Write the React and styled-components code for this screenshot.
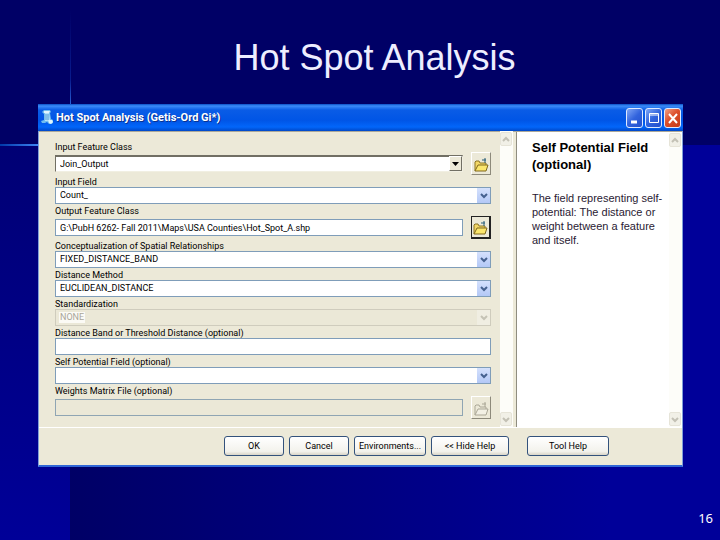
import React from 'react'
import styled, { createGlobalStyle, css } from 'styled-components'

const FORM_FONT = "Roboto, 'Liberation Sans', Arial, sans-serif"
const HELP_FONT = "'Liberation Sans', Arial, sans-serif"

const fields = [
  { id: 'inputClass', label: 'Input Feature Class', kind: 'classic', value: 'Join_Output', browse: 'normal' },
  { id: 'inputField', label: 'Input Field', kind: 'select', value: 'Count_' },
  { id: 'outputClass', label: 'Output Feature Class', kind: 'text', value: 'G:\\PubH 6262- Fall 2011\\Maps\\USA Counties\\Hot_Spot_A.shp', browse: 'focused' },
  { id: 'concept', label: 'Conceptualization of Spatial Relationships', kind: 'select', value: 'FIXED_DISTANCE_BAND' },
  { id: 'method', label: 'Distance Method', kind: 'select', value: 'EUCLIDEAN_DISTANCE' },
  { id: 'standard', label: 'Standardization', kind: 'select', value: 'NONE', disabled: true },
  { id: 'band', label: 'Distance Band or Threshold Distance (optional)', kind: 'text', value: '' },
  { id: 'potential', label: 'Self Potential Field (optional)', kind: 'select', value: '' },
  { id: 'weights', label: 'Weights Matrix File (optional)', kind: 'text', value: '', browse: 'disabled', disabled: true },
]

const ToolIcon = () => (
  <svg width="14" height="18" viewBox="0 0 14 18" aria-hidden="true">
    <path d="M2 3l2-2h6l1 2-1 1 1 6 2 1v3l-2 1H9l-2-2-2 1H2L1 12l3-1V5z" fill="#6fbdf0" />
    <path d="M4 2h6l-1 2H4zM8 11h4l1 2-2 2-2-1z" fill="#e0f5ff" />
    <path d="M5 4h4l1 7-3 1H5z" fill="#b5e2fb" />
    <path d="M5 6h4M5 8h4M5 10h4" stroke="#4a9ad6" />
  </svg>
)

const Chevron = ({ up, color }) => (
  <svg width="8" height="7" viewBox="0 0 8 7" aria-hidden="true">
    <path d={up ? 'M1 5l3-3 3 3' : 'M1 2l3 3 3-3'} fill="none" stroke={color} strokeWidth="2" />
  </svg>
)

const FolderIcon = ({ off }) => (
  <svg width="15" height="18" viewBox="0 0 15 18" aria-hidden="true">
    <path d="M1 16V7l1-1h3l1 2h6v3" fill={off ? 'none' : '#f3d867'} stroke={off ? '#aaa796' : '#8d7424'} />
    <path d="M1 16l3-6h10l-2 6z" fill={off ? '#f2f0e4' : '#fbe66c'} stroke={off ? '#aaa796' : '#80691c'} />
    <path d="M8 5h4M11 3v5" fill="none" stroke={off ? '#aaa796' : '#245a76'} />
  </svg>
)

const Field = ({ id, label, kind, value, browse, disabled }) => (
  <Row>
    <Label htmlFor={id}>{label}</Label>
    <Controls>
      <Box>
        {kind === 'text'
          ? <TextInput id={id} defaultValue={value} disabled={disabled} />
          : (
            <React.Fragment>
              <Select id={id} $classic={kind === 'classic'} defaultValue={value} disabled={disabled}>
                <option value={value}>{value}</option>
              </Select>
              <Arrow $classic={kind === 'classic'} $off={disabled}>
                {kind === 'classic'
                  ? <svg width="7" height="4" viewBox="0 0 7 4"><path d="M0 0h7L3.5 4z" fill="#000" /></svg>
                  : <Chevron color={disabled ? '#c5c3b5' : '#45618f'} />}
              </Arrow>
            </React.Fragment>
          )}
      </Box>
      {browse && (
        <Browse type="button" aria-label={`Browse ${label}`} $look={browse} disabled={browse === 'disabled'}>
          <FolderIcon off={browse === 'disabled'} />
        </Browse>
      )}
    </Controls>
  </Row>
)

const ScrollBar = () => (
  <Scroll>
    <ScrollButton type="button" aria-label="Scroll up"><Chevron up color="#c3c1b5" /></ScrollButton>
    <ScrollButton type="button" aria-label="Scroll down"><Chevron color="#c3c1b5" /></ScrollButton>
  </Scroll>
)

class App extends React.Component {
  render() {
    return (
      <Slide>
        <GlobalStyle />
        <Heading>Hot Spot Analysis</Heading>
        <Window>
          <TitleBar>
            <ToolIcon />
            <WindowTitle>Hot Spot Analysis (Getis-Ord Gi*)</WindowTitle>
            <Caption type="button" aria-label="Minimize">
              <svg width="14" height="16" viewBox="0 0 14 16"><path d="M3 12h6" stroke="#fff" strokeWidth="3" /></svg>
            </Caption>
            <Caption type="button" aria-label="Maximize">
              <svg width="14" height="16" viewBox="0 0 14 16"><path d="M2.5 3.5h9v9h-9zM3 5h8" fill="none" stroke="#fff" /></svg>
            </Caption>
            <Caption type="button" aria-label="Close" $close>
              <svg width="14" height="16" viewBox="0 0 14 16"><path d="M3 4l8 9M11 4l-8 9" stroke="#fff" strokeWidth="2" /></svg>
            </Caption>
          </TitleBar>
          <Body>
            <Form>
              {fields.map((field) => <Field key={field.id} {...field} />)}
            </Form>
            <ScrollBar />
            <Help>
              <HelpText>
                <HelpTitle>Self Potential Field (optional)</HelpTitle>
                <p>The field representing self-potential: The distance or weight between a feature and itself.</p>
              </HelpText>
              <ScrollBar />
            </Help>
          </Body>
          <Footer>
            <Button type="button" $width={60}>OK</Button>
            <Button type="button" $width={60}>Cancel</Button>
            <Button type="button" $width={72}>Environments...</Button>
            <Button type="button" $width={78}>&lt;&lt; Hide Help</Button>
            <HelpButton type="button" $width={82}>Tool Help</HelpButton>
          </Footer>
        </Window>
        <PageNumber>16</PageNumber>
      </Slide>
    )
  }
}

const GlobalStyle = createGlobalStyle`
  * {
    box-sizing: border-box;
  }
  body, h1, h2, p {
    margin: 0;
  }
  button, input, select {
    font-family: inherit;
    margin: 0;
    padding: 0;
  }
`

const Slide = styled.main`
  min-height: 100vh;
  display: flex;
  flex-direction: column;
  padding: 36px 37px 0 38px;
  font-family: ${FORM_FONT};
  background:
    linear-gradient(to bottom, rgba(30, 90, 230, 0), rgba(30, 90, 230, 0.3) 70%, #2f70e8) 70px 10px / 1px 100px no-repeat,
    linear-gradient(to right, #0038a8, #3f86f5 55%) 0 144px / 70px 2px no-repeat,
    linear-gradient(to bottom, #000074, #000099 75%) 0 145px / 70px 100% no-repeat,
    linear-gradient(to right, #000066, #000099 75%) 70px 145px / 100% 100% no-repeat,
    #000066;
`

const Heading = styled.h1`
  color: #eeeeff;
  font: 36px/44px ${HELP_FONT};
  text-align: center;
  padding-left: 28px;
  margin-bottom: 24px;
`

const Window = styled.section`
  display: flex;
  flex-direction: column;
  background: #ece9d8;
  border: 1px solid #7f9fd8;
  border-top: 0;
  border-bottom: 2px solid #2f66d6;
`

const TitleBar = styled.header`
  display: flex;
  align-items: center;
  gap: 2px;
  height: 27px;
  margin: 0 -1px;
  padding: 0 2px;
  background: linear-gradient(#0a4fc4, #3c8cf8 2px, #0a5ce6 6px, #0055e6 60%, #0266fa 85%, #0048c8);
`

const WindowTitle = styled.h2`
  flex: 1;
  color: #fff;
  font-size: 11px;
  line-height: 18px;
  text-shadow: 1px 1px #0a318f;
`

const Caption = styled.button`
  display: flex;
  align-items: center;
  justify-content: center;
  width: 17px;
  height: 20px;
  border: 1px solid #dfeaff;
  border-radius: 3px;
  background: ${props => props.$close
    ? 'linear-gradient(135deg, #f0a086, #dd4f2c 45%, #c23a18)'
    : 'linear-gradient(135deg, #7fa6f5, #3163dd 50%, #2450cc)'};
`

const Body = styled.div`
  display: flex;
  border-bottom: 1px solid #fff;
  box-shadow: inset 0 1px #aca899;
`

const Form = styled.form`
  flex: 1;
  display: flex;
  flex-direction: column;
  gap: 1px;
  padding: 10px 9px 8px 16px;
`

const Row = styled.div`
  display: flex;
  flex-direction: column;
`

const Label = styled.label`
  height: 11px;
  font-size: 9px;
  line-height: 13px;
  color: #000;
`

const Controls = styled.div`
  display: flex;
  align-items: center;
  gap: 8px;
`

const Box = styled.div`
  position: relative;
  flex: 1;
  display: flex;
`

const control = css`
  flex: 1;
  min-width: 0;
  height: 17px;
  padding: 0 4px;
  border: 1px solid #7f9db9;
  border-radius: 0;
  background: #fff;
  color: #000;
  font-size: 9px;
  line-height: 15px;
`

const TextInput = styled.input`
  ${control}
  &:disabled {
    background: #ebe8d7;
    border-color: #8fa5b3;
  }
`

const Select = styled.select`
  ${control}
  appearance: none;
  opacity: 1;
  ${props => props.$classic && css`
    border-color: #716f64 #f1efe2 #f1efe2 #716f64;
    border-top-width: 2px;
  `}
  &:disabled {
    background: linear-gradient(#fbfaf5, #fbfaf5) 3px 2px / 26px 11px no-repeat, #ebe8d7;
    border-color: #cfccbd;
    color: #a9a699;
  }
`

const Arrow = styled.span`
  position: absolute;
  top: 1px;
  right: 1px;
  bottom: 1px;
  width: 13px;
  display: flex;
  align-items: center;
  justify-content: center;
  pointer-events: none;
  background: ${props => props.$off ? '#f0eee2' : 'linear-gradient(#d5e1fd, #b3c8f6)'};
  ${props => props.$classic && css`
    background: #ece9d8;
    border: 1px solid;
    border-color: #fff #716f64 #716f64 #fff;
  `}
`

const Browse = styled.button`
  display: flex;
  align-items: center;
  justify-content: center;
  width: 20px;
  height: 23px;
  background: #ece9d8;
  border: 1px solid;
  border-color: #fff #8d8a7b #8d8a7b #fff;
  ${props => props.$look === 'focused' && css`
    border-color: #222;
    border-width: 1px 2px 2px 1px;
  `}
`

const Scroll = styled.div`
  display: flex;
  flex-direction: column;
  justify-content: space-between;
  width: 13px;
  padding: 1px 0;
  background: #fdfdf9;
`

const ScrollButton = styled.button`
  display: flex;
  align-items: center;
  justify-content: center;
  width: 12px;
  height: 14px;
  border: 1px solid #e6e4d8;
  border-radius: 2px;
  background: #f1f0e7;
`

const Help = styled.aside`
  flex: 0 0 166px;
  display: flex;
  margin-left: 3px;
  margin-top: 1px;
  border-left: 1px solid #8f8d80;
  background: #fff;
`

const HelpText = styled.div`
  flex: 1;
  padding: 7px 4px 0 15px;
  font: 11px/14px ${HELP_FONT};
  color: #2a1a33;
`

const HelpTitle = styled.h2`
  font-size: 13px;
  line-height: 17px;
  margin-bottom: 18px;
  color: #000;
`

const Footer = styled.footer`
  display: flex;
  justify-content: flex-end;
  gap: 5px;
  padding: 8px 73px 9px 16px;
`

const Button = styled.button`
  width: ${props => props.$width}px;
  height: 20px;
  border: 1px solid #33527c;
  border-radius: 3px;
  background: linear-gradient(#fff, #f3f2ec 80%, #d9d5c8);
  color: #000;
  font-size: 9px;
  line-height: 16px;
  white-space: nowrap;
`

const HelpButton = styled(Button)`
  margin-left: 13px;
`

const PageNumber = styled.footer`
  margin: auto -30px 13px 0;
  text-align: right;
  color: #fff;
  font: 13px/18px 'Noto Sans', sans-serif;
`

export default App
